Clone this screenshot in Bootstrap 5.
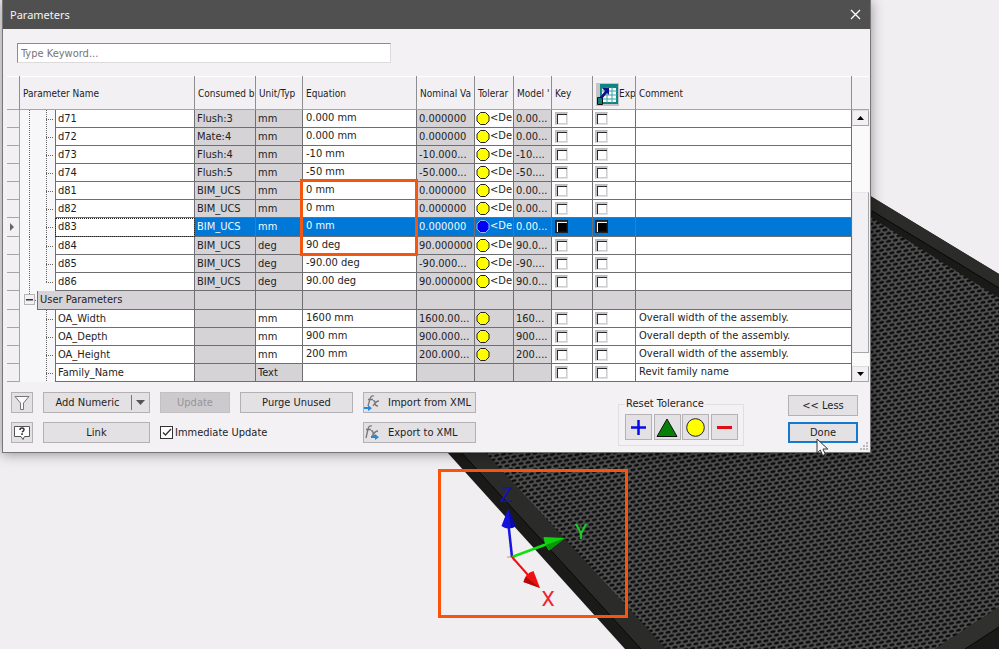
<!DOCTYPE html>
<html lang="en">
<head>
<meta charset="utf-8">
<meta name="viewport" content="width=device-width, initial-scale=1">
<title>Parameters</title>
<link href="https://cdn.jsdelivr.net/npm/bootstrap@5.3.0/dist/css/bootstrap.min.css" rel="stylesheet">
<style>
  body { font: 11px/14px Tahoma, "DejaVu Sans Condensed", "DejaVu Sans", sans-serif; color: #1e1d24; background: #f0eef1; }
  .scene { inset: 0; z-index: 0; }
  .dialog { margin: 0 128px 0 2px; background: #f3f1f4; border: 1px solid #777; border-top: 0; box-shadow: 0 1px 12px rgba(0,0,0,.4); z-index: 1; }
  .titlebar { background: #505050; color: #f4f4f4; height: 29px; padding: 0 7px; font: 11px/16px "Noto Sans", sans-serif; }
  .close-x { background: none; border: 0; padding: 0; width: 15px; height: 15px; display: flex; }
  .search-wrap { padding: 14px 14px 13px; }
  .search { width: 374px; max-width: 100%; height: 20px; border: 1px solid #dcdadd; border-top-color: #8c8b8d; border-left-color: #8c8b8d; padding: 0 3px; font: inherit; background: #fff; outline: 0; }
  .search::placeholder { color: #77757a; opacity: 1; }

  .params { table-layout: fixed; border-collapse: separate; border-spacing: 0; width: 100%; }
  .params th { height: 34px; background: #f2f0f3; font-size: 10px; font-weight: 400; padding: 3px 0 0 3px; border-right: 1px solid #8f8e90; border-bottom: 1px solid #a5a4a6; box-shadow: inset 0 1px 0 #fff; overflow: hidden; white-space: nowrap; }
  .params td { height: 18px; padding: 0 2px; background: #fff; border-right: 1px solid #6f6e70; border-bottom: 1px solid #6f6e70; overflow: hidden; white-space: nowrap; line-height: 17px; vertical-align: top; }
  .params td.raised { padding-left: 3px; line-height: 15px; }
  .params td.tol { padding-left: 1px; }
  .params td.locked { background: #d5d3d6; }
  .params td.selector { background: #f2f0f3; border-color: #a5a4a6; padding-left: 3px; }
  .params td.gutter { background-color: #f7f6f8; border: 0; padding: 0; }
  .params td.trunk, .params td.branch, .params td.leaf { background-repeat: no-repeat; background-image: repeating-linear-gradient(#666 0 1px, transparent 1px 2px), repeating-linear-gradient(90deg, #666 0 1px, transparent 1px 2px); }
  .params td.trunk { background-size: 1px 100%, 0 0; background-position: 9px 0, 0 0; }
  .params td.branch { background-size: 1px 100%, 8px 1px; background-position: 9px 0, 9px 9px; }
  .params td.leaf { background-size: 1px 9px, 8px 1px; background-position: 9px 0, 9px 9px; }
  .params td.pname { border-left: 1px solid #6f6e70; }
  .params tr.tall td { height: 19px; }
  .params tr.current td.pick { background: #0078d7; color: #f4f8fc; }
  .params tr.current td.pname { outline: 1px dotted #222; outline-offset: -1px; }
  .params td.tick { line-height: 0; padding: 2px 0 0 3px; }
  .params td.tick + td.tick { padding-left: 2px; }
  .expander { width: 11px; height: 11px; margin: 3px 0 0 4px; padding: 0; background: #f2f0f3; border: 1px solid #b5b4b6; line-height: 0; display: flex; align-items: center; justify-content: center; }
  .sunk { appearance: none; margin: 0; width: 13px; height: 13px; background: #fff; border: 1px solid #bdbbbe; border-right-color: #e3e1e4; border-bottom-color: #e3e1e4; box-shadow: inset 1px 1px 0 #c4c2c5, inset 2px 2px 0 #2a2a2a, inset -1px -1px 0 #cfcdd0; }
  .current .sunk { background: #000; border-color: #222; box-shadow: inset 1px 1px 0 #333, inset 2px 2px 0 #f4f4f4, inset -1px -1px 0 #111; }

  .grid-wrap { padding-right: 1px; }
  .scroller { width: 17px; background: #fafafa; }
  .scroller-head { height: 34px; background: #f2f0f3; border-bottom: 1px solid #a5a4a6; box-shadow: inset 0 1px 0 #fff; }
  .scroller button { height: 16px; padding: 0; background: #f2f0f3; border: 1px solid #dedce0; border-right-color: #a5a4a6; border-bottom-color: #a5a4a6; line-height: 0; }
  .track-top { flex: 67 0 0; }
  .thumb { flex: 161 0 0; background: #f2f0f3; border: 1px solid #e8e6e9; border-right-color: #a5a4a6; border-bottom-color: #a5a4a6; }
  .track-bottom { flex: 13 0 0; }

  .callout { border: 3px solid #f4560f; left: 297px; top: 103px; width: 118px; height: 77px; pointer-events: none; }
  .panel { padding: 10px 12px 6px 8px; }
  .actions { display: grid; grid-template-columns: 22px 107px 70px 113px 113px; gap: 9px 10px; }
  .actions > *, .side > * { height: 21px; }
  .flat { font: inherit; color: inherit; background: #e3e1e4; border: 1px solid #b3b1b4; padding: 0; display: flex; align-items: center; justify-content: center; white-space: nowrap; }
  .flat:disabled { background: #cccacd; border-color: #c2c0c3; color: #97959a; }
  .flat.primary { border: 2px solid #1279cf; }
  .split-mark { width: 18px; height: 15px; border-left: 1px solid #777; }
  .tickbox { appearance: none; flex: none; margin: 0 2px 0 0; width: 13px; height: 13px; background: #fff; border: 1px solid #333; }
  .tick-art { left: 2px; top: 6px; pointer-events: none; }
  .tolerance { border: 1px solid #e0dee1; padding: 0 5px 5px 6px; min-width: 0; width: 126px; margin: 5px 44px 0 0; }
  .tolerance legend { float: none; width: auto; font-size: 11px; line-height: 14px; padding: 0 1px; margin: 0 0 3px; }
  .tolerance .flat { width: 27px; height: 26px; }
  .side { display: grid; grid-template-columns: 70px; gap: 6px; align-content: start; padding-top: 3px; }
  .grip { right: 1px; bottom: 1px; }
</style>
<script src="https://cdn.jsdelivr.net/npm/bootstrap@5.3.0/dist/js/bootstrap.bundle.min.js"></script>
</head>
<body>
<main class="position-relative min-vh-100 overflow-hidden">

  <svg class="scene position-absolute w-100 h-100" viewBox="0 0 999 649" preserveAspectRatio="xMinYMin slice" aria-label="Model view">
    <defs>
      <pattern id="mesh" width="7" height="8" patternUnits="userSpaceOnUse" patternTransform="skewY(-9)">
        <rect width="7" height="8" fill="#555"/>
        <g fill="#0d0d0d">
          <ellipse cx="3" cy="2" rx="2.7" ry="1.6"/>
          <ellipse cx="-.5" cy="6" rx="2.7" ry="1.6"/>
          <ellipse cx="6.5" cy="6" rx="2.7" ry="1.6"/>
        </g>
      </pattern>
    </defs>
    <rect width="999" height="649" fill="#f0eef1"/>
    <path d="M355 350 447 452 625 649H999V274L872 197 700 93Z" fill="#1a1a18"/>
    <path d="M461 452 641 649H666L485 452 394 353 370 353ZM872 197 999 274V288L872 211 700 105V93Z" fill="#2b2b2a"/>
    <path d="M394 353 485 452 666 649H935L999 607V298L872 218 700 110Z" fill="url(#mesh)"/>
    <path d="M935 649 999 607V627L965 649Z" fill="#30302f"/>
    <path d="M965 649 999 627M461 452 641 649M872 211 999 288" stroke="#080808" fill="none"/>
    <path d="M507 557h9M511 553l3 8" stroke="#d69a4a" stroke-width="1"/>
    <path d="M512 557 508.500 525" stroke="#1616e0" stroke-width="2.500"/>
    <path d="M508 509 501.500 526q7 5 14.500 0Z" fill="#1212d8"/>
    <path d="M509 512 511 528q4-1 5-2Z" fill="#0a0aa4"/>
    <path d="M512 557 547 544" stroke="#10e010" stroke-width="2.500"/>
    <path d="M565 538 543.500 537q1 8 5.500 13.500Z" fill="#0fd20f"/>
    <path d="M565 538 546 545 549 550.500Z" fill="#079a07"/>
    <path d="M512 557 528 575" stroke="#f01010" stroke-width="2"/>
    <path d="M540 588 533.500 571q-8 2-10 11Z" fill="#ee1111"/>
    <path d="M540 588 526 577q-2 3-2.500 5Z" fill="#b00b0b"/>
    <g font-family="Roboto, sans-serif" font-size="21" font-weight="400" text-anchor="middle">
      <text x="506" y="502" fill="#1414b4">Z</text>
      <text x="581" y="539" fill="#18cf28">Y</text>
      <text x="548" y="606" fill="#ee2430">X</text>
    </g>
    <rect x="439.500" y="470.500" width="187" height="146" fill="none" stroke="#fb520c" stroke-width="3"/>
  </svg>

  <section class="dialog position-relative" aria-label="Parameters">
    <header class="titlebar d-flex align-items-center justify-content-between">
      <span>Parameters</span>
      <button class="close-x align-items-center justify-content-center" type="button" aria-label="Close"><svg width="11" height="11" viewBox="0 0 11 11"><path d="M1 1 10 10M10 1 1 10" stroke="#fff" stroke-width="1.300"/></svg></button>
    </header>

    <div class="search-wrap"><input class="search d-block" type="text" placeholder="Type Keyword..." aria-label="Type Keyword"></div>

    <div class="grid-wrap position-relative d-flex">
      <div class="flex-grow-1 overflow-hidden ps-1">
      <table class="params">
        <colgroup>
          <col style="width:13px"><col style="width:17px"><col style="width:18px"><col style="width:140px"><col style="width:61px"><col style="width:47px"><col style="width:114px"><col style="width:58px"><col style="width:39px"><col style="width:38px"><col style="width:41px"><col style="width:43px"><col>
        </colgroup>
        <thead>
          <tr>
            <th></th><th colspan="3">Parameter Name</th><th>Consumed b</th><th>Unit/Typ</th><th>Equation</th><th>Nominal Va</th><th>Tolerar</th><th>Model '</th><th>Key</th>
            <th><span class="d-flex align-items-center"><svg class="flex-shrink-0" width="23" height="23" viewBox="0 0 23 23"><path fill="#c6c4c7" d="M0 0h23v23H0z"/><path fill="#fff" stroke="#0e8585" stroke-width="2" d="M5 2h16v18H5z"/><path fill="#0e8585" d="M5 2h16v3H5z"/><path d="M5 8h16M5 12h16M5 16h16M11 4v16M16 4v16" stroke="#35a5a5"/><path fill="#0e7d78" stroke="#111" d="M1.500 14.500h5v7h-5z"/><path fill="#10108a" d="M6 5h7v7l-2-2-5 6-2-2 5-6Z"/></svg>Exp</span></th>
            <th>Comment</th>
          </tr>
        </thead>
        <tbody id="rows"></tbody>
      </table>
      </div>
      <div class="scroller d-flex flex-column flex-shrink-0">
        <div class="scroller-head"></div>
        <button type="button" aria-label="Scroll up"><svg width="7" height="4"><path d="M0 4 3.500 0 7 4Z"/></svg></button>
        <div class="track-top"></div><div class="thumb"></div><div class="track-bottom"></div>
        <button type="button" aria-label="Scroll down"><svg width="7" height="4"><path d="M0 0 3.500 4 7 0Z"/></svg></button>
      </div>
      <div class="callout position-absolute"></div>
    </div>

    <footer class="panel d-flex justify-content-between">
      <div class="actions align-content-start">
        <button class="flat" type="button" aria-label="Filter"><svg width="16" height="16" viewBox="0 0 16 16"><path d="M1 1.500h14L9.500 8v6.500h-3V8Z" fill="#f8f8f8" stroke="#777"/></svg></button>
        <button class="flat" type="button"><span class="flex-grow-1">Add Numeric</span><span class="split-mark d-flex align-items-center justify-content-center"><svg width="9" height="5"><path d="M0 0h9L4.500 5Z" fill="#555"/></svg></span></button>
        <button class="flat" type="button" disabled>Update</button>
        <button class="flat" type="button">Purge Unused</button>
        <button class="flat justify-content-start" type="button"><svg class="flex-shrink-0" width="16" height="17" viewBox="0 0 16 17"><g fill="none" stroke="#777" stroke-width="1.300"><path d="M10 2q-3-1-4 3L4 12M4 5.500h5M9 7q2-1 2 2t3 3M15 7q-3 0-6 5"/></g><path d="M0 13h4v-2l4 3.200L4 17v-2H0Z" fill="#2788da"/></svg><span class="ps-2">Import from XML</span></button>
        <button class="flat" type="button" aria-label="Help"><svg width="16" height="16" viewBox="0 0 16 16"><path d="M.5 1.500h15v10h-5L9 14.500l-2-3H.5Z" fill="#fff" stroke="#555"/><path d="M6 5q0-2 2-2t2 1.700Q10 6 8 7" fill="none" stroke="#333" stroke-width="1.500"/><path d="M7.200 8.300h1.600v1.600H7.200z" fill="#333"/></svg></button>
        <button class="flat" type="button">Link</button>
        <label class="position-relative d-flex align-items-center text-nowrap"><input class="tickbox" type="checkbox" checked>Immediate Update<svg class="tick-art position-absolute" width="10" height="9"><path d="M1 4.500 3.500 7 9 1" fill="none" stroke="#333" stroke-width="1.300"/></svg></label>
        <span></span>
        <button class="flat justify-content-start" type="button"><svg class="flex-shrink-0" width="16" height="17" viewBox="0 0 16 17"><g fill="none" stroke="#777" stroke-width="1.300"><path d="M8 2q-3-1-4 3L2 14M2 5.500h5M7 7q2-1 2 2t3 3M14 7q-3 0-6 5"/></g><path d="M7 12h4v-2l4 3.200L11 16v-2H7Z" fill="#2788da"/></svg><span class="ps-2">Export to XML</span></button>
      </div>
      <div class="d-flex align-items-start">
        <fieldset class="tolerance">
          <legend>Reset Tolerance</legend>
          <div class="d-flex justify-content-between">
            <button class="flat" type="button" aria-label="Plus"><svg width="15" height="15"><path d="M0 7.500h15M7.500 0v15" stroke="#0a0aea" stroke-width="2.500"/></svg></button>
            <button class="flat" type="button" aria-label="Triangle"><svg width="22" height="19"><path d="M11 1 21 18.500H1Z" fill="#078007" stroke="#111"/></svg></button>
            <button class="flat" type="button" aria-label="Circle"><svg width="19" height="19"><circle cx="9.500" cy="9.500" r="8.800" fill="#ff0" stroke="#222"/></svg></button>
            <button class="flat" type="button" aria-label="Minus"><svg width="15" height="3"><path d="M0 0h15v3H0z" fill="#e00d12"/></svg></button>
          </div>
        </fieldset>
        <div class="side">
          <button class="flat" type="button">&lt;&lt; Less</button>
          <button class="flat primary" type="button">Done</button>
        </div>
      </div>
    </footer>
    <svg class="grip position-absolute" width="9" height="9"><path d="M6 0h2v2H6zM3 3h2v2H3zM6 3h2v2H6zM0 6h2v2H0zM3 6h2v2H3zM6 6h2v2H6z" fill="#bbb9bc"/></svg>
  </section>

  <svg class="position-absolute z-3" style="left:816px;top:438px" width="14" height="19" viewBox="0 0 14 19"><path d="M1 1v14l3.300-3 2.400 5.500 2.600-1.200L7 11h4.800Z" fill="#f6f6f6" stroke="#333"/></svg>
</main>

<script>
  // name, consumed by, unit, equation, nominal, tolerance label, model, comment
  const data = [
    ['d71', 'Flush:3', 'mm', '0.000 mm', '0.000000', '<De', '0.00...'],
    ['d72', 'Mate:4', 'mm', '0.000 mm', '0.000000', '<De', '0.00...'],
    ['d73', 'Flush:4', 'mm', '-10 mm', '-10.000...', '<De', '-10....'],
    ['d74', 'Flush:5', 'mm', '-50 mm', '-50.000...', '<De', '-50....'],
    ['d81', 'BIM_UCS', 'mm', '0 mm', '0.000000', '<De', '0.00...'],
    ['d82', 'BIM_UCS', 'mm', '0 mm', '0.000000', '<De', '0.00...'],
    ['d83', 'BIM_UCS', 'mm', '0 mm', '0.000000', '<De', '0.00...'],
    ['d84', 'BIM_UCS', 'deg', '90 deg', '90.000000', '<De', '90.0...'],
    ['d85', 'BIM_UCS', 'deg', '-90.00 deg', '-90.000...', '<De', '-90....'],
    ['d86', 'BIM_UCS', 'deg', '90.00 deg', '90.000000', '<De', '90.0...'],
    null,
    ['OA_Width', '', 'mm', '1600 mm', '1600.00...', '', '160...', 'Overall width of the assembly.'],
    ['OA_Depth', '', 'mm', '900 mm', '900.000...', '', '900....', 'Overall depth of the assembly.'],
    ['OA_Height', '', 'mm', '200 mm', '200.000...', '', '200....', 'Overall width of the assembly.'],
    ['Family_Name', '', 'Text', '', '', '', '', 'Revit family name']
  ];
  const esc = s => (s || '').replace('<', '&lt;');
  const dot = on => `<svg class="float-start" width="14" height="17" viewBox="0 0 14 17"><path d="M4.500 2.500h5l3.500 3.500v5l-3.500 3.500h-5L1 11V6Z" fill="${on ? '#0000f5' : '#ff0'}" stroke="${on ? '#9bb8f0' : '#222'}"/></svg>`;
  document.getElementById('rows').innerHTML = data.map((r, i) => {
    if (!r) return `<tr class="tall"><td class="selector"></td><td class="gutter leaf"><button class="expander" type="button" aria-label="Collapse"><svg width="7" height="2"><path d="M0 0h7v1.500H0z" fill="#333"/></svg></button></td><td class="locked pname" colspan="2">User Parameters</td>${'<td class="locked"></td>'.repeat(9)}</tr>`;
    const cur = r[0] === 'd83', user = i > 10, text = r[2] === 'Text';
    const box = n => `<td class="tick pick"><input class="sunk" type="checkbox" aria-label="${n} ${r[0]}"></td>`;
    return `<tr class="${cur ? 'current tall' : ''}">
      <td class="selector">${cur ? '<svg width="4" height="8"><path d="M0 0 4 4 0 8Z" fill="#666"/></svg>' : ''}</td>
      <td class="gutter ${user ? '' : 'trunk'}"></td>
      <td class="gutter ${r[0] === 'd86' ? 'leaf' : 'branch'}"></td>
      <td class="pname">${r[0]}</td>
      <td class="locked pick">${r[1]}</td>
      <td class="pick ${!user || text ? 'locked' : ''}">${r[2]}</td>
      <td class="pick raised">${r[3]}</td>
      <td class="locked pick">${r[4]}</td>
      <td class="raised tol pick ${user ? 'locked' : ''}">${text ? '' : dot(cur)}${esc(r[5])}</td>
      <td class="locked pick">${r[6]}</td>
      ${box('Key')}${box('Export')}
      <td class="pick raised">${r[7] || ''}</td></tr>`;
  }).join('');
</script>
</body>
</html>
